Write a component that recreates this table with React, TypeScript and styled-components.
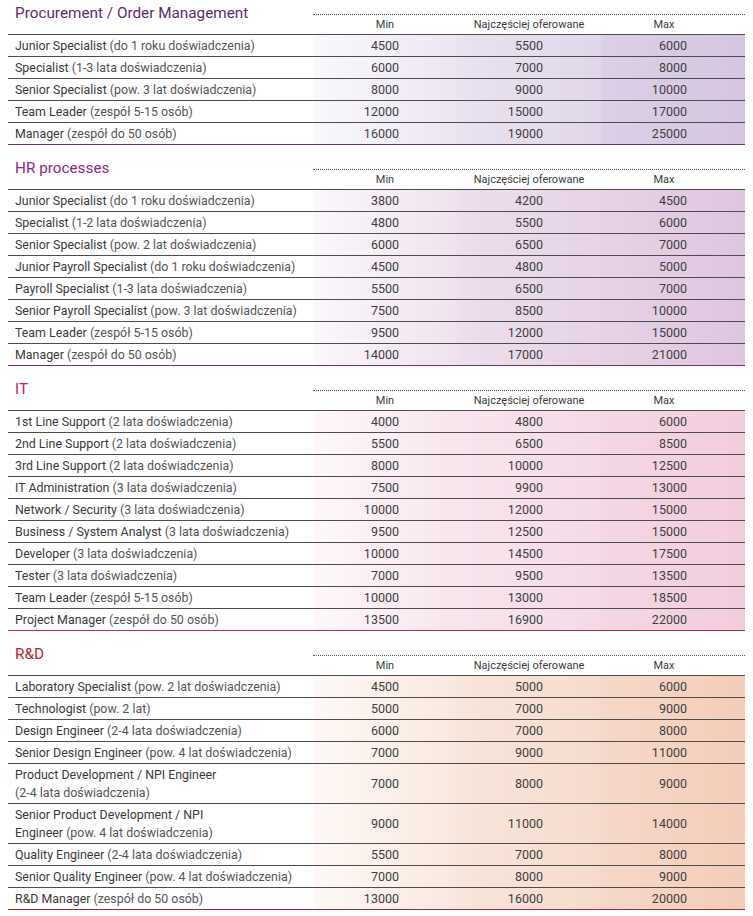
import React from "react";
import styled, { createGlobalStyle } from "styled-components";

const Global = createGlobalStyle`
  html, body { margin: 0; padding: 0; background: #ffffff; }
  body { font-family: Roboto, "Noto Sans", "Liberation Sans", sans-serif; }
`;

type Theme = {
  title: string;
  line: string;
  min: [string, string];
  mid: [string, string];
  max: [string, string];
};

type Row = { name: string; detail: string; values: [number, number, number]; br?: boolean };

type Section = { title: string; theme: Theme; rows: Row[] };

const purple: Theme = {
  title: "#5b2c6f",
  line: "#6e2d6e",
  min: ["#faf8fc", "#ece6f2"],
  mid: ["#e9e2ef", "#e1d7ea"],
  max: ["#ddcfe7", "#d6c6e1"],
};
const mauve: Theme = {
  title: "#8e2684",
  line: "#7d2a78",
  min: ["#fbf7fb", "#f0e3ef"],
  mid: ["#eddfed", "#e6d3e6"],
  max: ["#e6d2e6", "#dfc6e0"],
};
const pink: Theme = {
  title: "#c6206f",
  line: "#b52a62",
  min: ["#fef8fa", "#f8e5ee"],
  mid: ["#f8e5ee", "#f5dae7"],
  max: ["#f5d7e4", "#f2cddd"],
};
const peach: Theme = {
  title: "#b51f30",
  line: "#a82433",
  min: ["#fef9f6", "#f9e8df"],
  mid: ["#f9e5db", "#f6dbcd"],
  max: ["#f6d8c9", "#f4cdb9"],
};

const sections: Section[] = [
  {
    title: "Procurement / Order Management",
    theme: purple,
    rows: [
      { name: "Junior Specialist", detail: "(do 1 roku doświadczenia)", values: [4500, 5500, 6000] },
      { name: "Specialist", detail: "(1-3 lata doświadczenia)", values: [6000, 7000, 8000] },
      { name: "Senior Specialist", detail: "(pow. 3 lat doświadczenia)", values: [8000, 9000, 10000] },
      { name: "Team Leader", detail: "(zespół 5-15 osób)", values: [12000, 15000, 17000] },
      { name: "Manager", detail: "(zespół do 50 osób)", values: [16000, 19000, 25000] },
    ],
  },
  {
    title: "HR processes",
    theme: mauve,
    rows: [
      { name: "Junior Specialist", detail: "(do 1 roku doświadczenia)", values: [3800, 4200, 4500] },
      { name: "Specialist", detail: "(1-2 lata doświadczenia)", values: [4800, 5500, 6000] },
      { name: "Senior Specialist", detail: "(pow. 2 lat doświadczenia)", values: [6000, 6500, 7000] },
      { name: "Junior Payroll Specialist", detail: "(do 1 roku doświadczenia)", values: [4500, 4800, 5000] },
      { name: "Payroll Specialist", detail: "(1-3 lata doświadczenia)", values: [5500, 6500, 7000] },
      { name: "Senior Payroll Specialist", detail: "(pow. 3 lat doświadczenia)", values: [7500, 8500, 10000] },
      { name: "Team Leader", detail: "(zespół 5-15 osób)", values: [9500, 12000, 15000] },
      { name: "Manager", detail: "(zespół do 50 osób)", values: [14000, 17000, 21000] },
    ],
  },
  {
    title: "IT",
    theme: pink,
    rows: [
      { name: "1st Line Support", detail: "(2 lata doświadczenia)", values: [4000, 4800, 6000] },
      { name: "2nd Line Support", detail: "(2 lata doświadczenia)", values: [5500, 6500, 8500] },
      { name: "3rd Line Support", detail: "(2 lata doświadczenia)", values: [8000, 10000, 12500] },
      { name: "IT Administration", detail: "(3 lata doświadczenia)", values: [7500, 9900, 13000] },
      { name: "Network / Security", detail: "(3 lata doświadczenia)", values: [10000, 12000, 15000] },
      { name: "Business / System Analyst", detail: "(3 lata doświadczenia)", values: [9500, 12500, 15000] },
      { name: "Developer", detail: "(3 lata doświadczenia)", values: [10000, 14500, 17500] },
      { name: "Tester", detail: "(3 lata doświadczenia)", values: [7000, 9500, 13500] },
      { name: "Team Leader", detail: "(zespół 5-15 osób)", values: [10000, 13000, 18500] },
      { name: "Project Manager", detail: "(zespół do 50 osób)", values: [13500, 16900, 22000] },
    ],
  },
  {
    title: "R&D",
    theme: peach,
    rows: [
      { name: "Laboratory Specialist", detail: "(pow. 2 lat doświadczenia)", values: [4500, 5000, 6000] },
      { name: "Technologist", detail: "(pow. 2 lat)", values: [5000, 7000, 9000] },
      { name: "Design Engineer", detail: "(2-4 lata doświadczenia)", values: [6000, 7000, 8000] },
      { name: "Senior Design Engineer", detail: "(pow. 4 lat doświadczenia)", values: [7000, 9000, 11000] },
      { name: "Product Development / NPI Engineer", detail: "(2-4 lata doświadczenia)", values: [7000, 8000, 9000], br: true },
      { name: "Senior Product Development / NPI\nEngineer", detail: "(pow. 4 lat doświadczenia)", values: [9000, 11000, 14000] },
      { name: "Quality Engineer", detail: "(2-4 lata doświadczenia)", values: [5500, 7000, 8000] },
      { name: "Senior Quality Engineer", detail: "(pow. 4 lat doświadczenia)", values: [7000, 8000, 9000] },
      { name: "R&D Manager", detail: "(zespół do 50 osób)", values: [13000, 16000, 20000] },
    ],
  },
];

const Page = styled.div`
  padding: 0 8px 8px 8px;
  display: flex;
  flex-direction: column;
  gap: 10px;
`;

const Block = styled.section``;

const Head = styled.div`
  display: grid;
  grid-template-columns: 305px 432px;
  height: 34px;
`;

const Title = styled.h2<{ $color: string }>`
  margin: 0;
  padding: 3px 0 0 7px;
  font-size: 15.3px;
  font-weight: 400;
  line-height: 20px;
  color: ${(p) => p.$color};
  white-space: nowrap;
`;

const ColHeads = styled.div`
  margin-top: 14px;
  border-top: 1px dotted #555;
  display: grid;
  grid-template-columns: 144px 144px 144px;
  align-items: center;
`;

const ColHead = styled.div<{ $shift?: number }>`
  font-size: 11px;
  line-height: 19px;
  color: #3c3c3c;
  text-align: center;
  padding-right: ${(p) => p.$shift ?? 0}px;
`;

const Body = styled.div<{ $line: string }>`
  border-bottom: 1px solid ${(p) => p.$line};
`;

const RowBox = styled.div`
  display: grid;
  grid-template-columns: 305px 144px 144px 144px;
  border-top: 1px solid #4d4d4d;
`;

const Label = styled.div`
  padding: 2px 0 1px 7px;
  font-size: 12.4px;
  line-height: 18px;
  color: #3a3a3a;
  white-space: pre-line;
`;

const Detail = styled.span`
  color: #555;
`;

const Num = styled.div<{ $from: string; $to: string }>`
  display: flex;
  align-items: center;
  justify-content: flex-end;
  padding: 1px 58px 0 0;
  font-size: 12.5px;
  line-height: 18px;
  color: #3f3f3f;
  background: linear-gradient(to right, ${(p) => p.$from}, ${(p) => p.$to});
`;

function TableRow({ row, theme }: { row: Row; theme: Theme }) {
  const grads = [theme.min, theme.mid, theme.max];
  return (
    <RowBox>
      <Label>
        {row.name}
        {row.br ? "\n" : " "}
        <Detail>{row.detail}</Detail>
      </Label>
      {row.values.map((v, i) => (
        <Num key={i} $from={grads[i][0]} $to={grads[i][1]}>
          {v}
        </Num>
      ))}
    </RowBox>
  );
}

export default function App() {
  return (
    <>
      <Global />
      <Page>
        {sections.map((s) => (
          <Block key={s.title}>
            <Head>
              <Title $color={s.theme.title}>{s.title}</Title>
              <ColHeads>
                <ColHead>Min</ColHead>
                <ColHead>Najczęściej oferowane</ColHead>
                <ColHead $shift={18}>Max</ColHead>
              </ColHeads>
            </Head>
            <Body $line={s.theme.line}>
              {s.rows.map((r) => (
                <TableRow key={r.name + r.detail} row={r} theme={s.theme} />
              ))}
            </Body>
          </Block>
        ))}
      </Page>
    </>
  );
}
